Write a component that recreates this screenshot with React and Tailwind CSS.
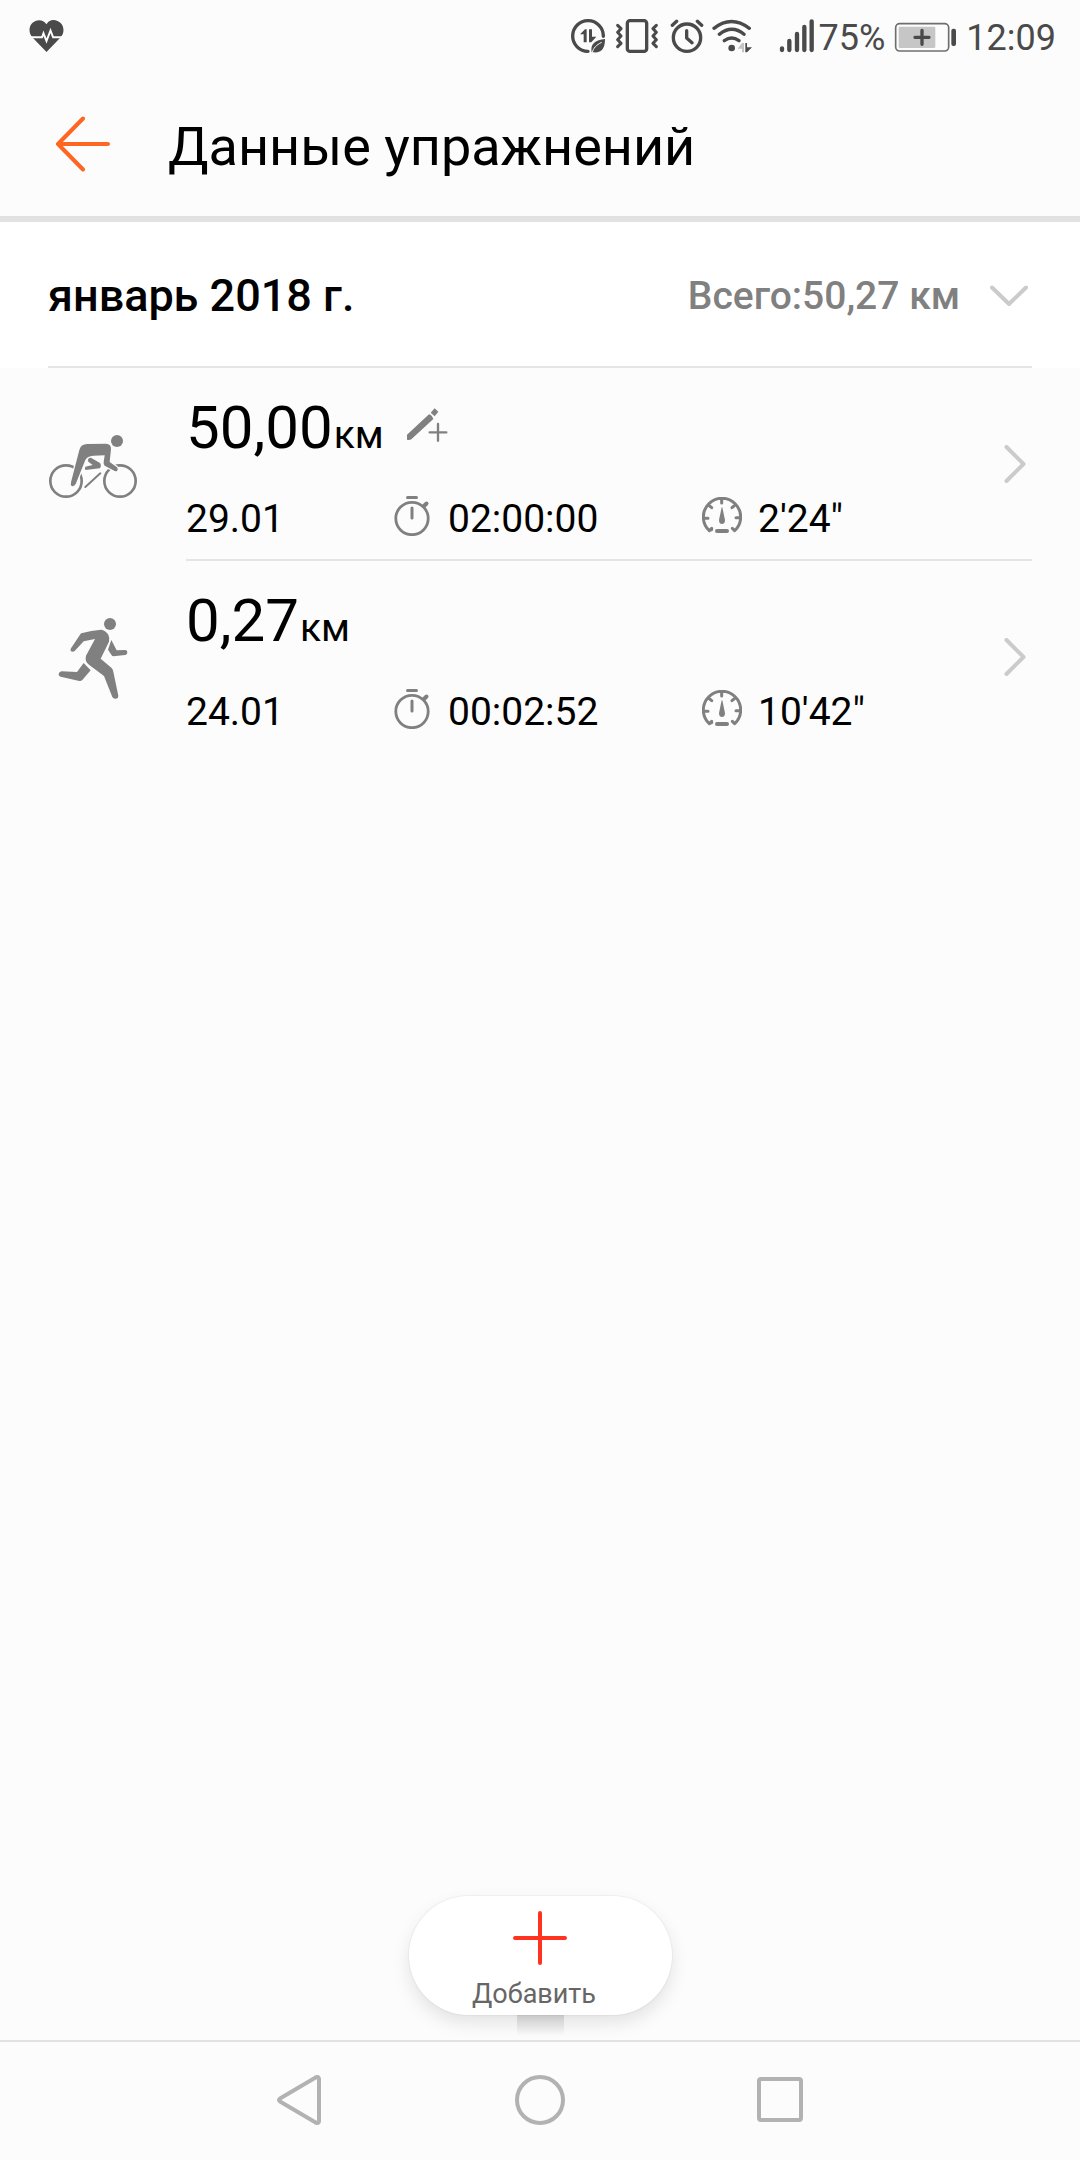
const workouts = [
  { id: 1, Icon: CyclistIcon, type: 'Велосипед', distance: '50,00', date: '29.01', time: '02:00:00', pace: '2\'24"', manual: true },
  { id: 2, Icon: RunnerIcon, type: 'Бег', distance: '0,27', date: '24.01', time: '00:02:52', pace: '10\'42"', manual: false }
]

export default function App() {
  return (
    <div className="min-h-screen flex flex-col bg-[#fcfcfc] text-black font-['Roboto','Noto_Sans',sans-serif]">
      <StatusBar />

      {/* Title bar */}
      <header className="h-[150px] flex items-center pl-12 border-b-6 border-[#e2e2e2]">
        <button type="button" aria-label="Назад" className="shrink-0 w-[72px]">
          <BackIcon />
        </button>
        <h1 className="pt-1.5 pl-12 text-[54px] leading-[72px]">Данные упражнений</h1>
      </header>

      <main className="flex-1 flex flex-col">
        {/* Month summary */}
        <section className="bg-white px-12">
          <button
            type="button"
            aria-expanded="true"
            className="w-full h-[146px] pt-[3px] flex items-center border-b-2 border-[#e5e5e5] text-left font-medium"
          >
            <span className="flex-1 text-[45px] leading-[60px]">январь 2018 г.</span>
            <span className="text-[39px] leading-[48px] text-[#808080]">Всего:50,27 км</span>
            <svg className="ml-[30px] mr-1 w-[38px] h-[22px]" viewBox="0 0 38 22" fill="none" stroke="#cbcbcb" strokeWidth="4" strokeLinecap="round" strokeLinejoin="round">
              <path d="M2 2.5 19 19 36 2.5" />
            </svg>
          </button>
        </section>

        <ul>
          {workouts.map(w => (
            <Workout key={w.id} {...w} />
          ))}
        </ul>

        {/* Add button */}
        <div className="mt-auto mb-[25px] flex justify-center">
          <div className="relative">
            <span className="absolute left-[108px] top-full w-[47px] h-5 bg-linear-to-b from-[#dcdcdc] to-[#fafafa]" />
            <button
              type="button"
              className="relative w-[263px] h-[119px] pt-[15px] flex flex-col items-center rounded-full bg-white shadow-[0_0_1px_1px_rgba(0,0,0,0.04),0_8px_18px_rgba(0,0,0,0.1)]"
            >
              <svg className="w-[54px] h-[54px]" viewBox="0 0 54 54" stroke="#ff3320" strokeWidth="4" strokeLinecap="round">
                <path d="M27 2v50M2 27h50" />
              </svg>
              <span className="mt-[13px] mr-3 text-[27px] leading-8 text-[#666]">Добавить</span>
            </button>
          </div>
        </div>
      </main>

      <NavBar />
    </div>
  )
}

function Workout({ Icon, type, distance, date, time, pace, manual }) {
  return (
    <li className="group">
      <a href="#" className="flex px-12">
        <span className="shrink-0 w-[138px] flex items-center pt-1">
          <Icon label={type} />
        </span>
        <span className="flex-1 flex items-center border-b-2 border-[#e5e5e5] group-last:border-transparent">
          <span className="flex-1 pt-5 pb-4">
            <span className="flex items-baseline h-20">
              <span className="text-[60px] leading-[80px]">{distance}</span>
              <span className="ml-px text-[39px] leading-[48px]">км</span>
              {manual && <ManualIcon />}
            </span>
            <span className="mt-[27px] -mr-7 grid grid-cols-[208fr_308fr_330fr] text-[39px] leading-[48px]">
              <span>{date}</span>
              <span className="flex items-start gap-[18px]">
                <StopwatchIcon />
                {time}
              </span>
              <span className="flex items-start gap-4">
                <GaugeIcon />
                {pace}
              </span>
            </span>
          </span>
          <svg className="mr-1.5 w-[22px] h-[38px]" viewBox="0 0 22 38" fill="none" stroke="#cbcbcb" strokeWidth="4" strokeLinecap="round" strokeLinejoin="round">
            <path d="M2.5 2 19.5 19 2.5 36" />
          </svg>
        </span>
      </a>
    </li>
  )
}

function StatusBar() {
  return (
    <div className="h-[72px] flex items-center pl-[29px] pr-6 text-[36px] leading-[48px] text-[#4a4a4a]">
      <svg className="w-[35px] h-8" viewBox="0 0 35 32">
        <path fill="#4a4a4a" d="M17.5 32 3.5 17.5C-1.5 12 0 3.5 6.5 1 10.5-.6 15 .6 17.5 4.2 20 0 24.5-.8 28.5 1 35 3.5 36.5 12 31.5 17.5Z" />
        <path fill="none" stroke="#fcfcfc" strokeWidth="2" d="M2 17.3h11l1.5-4L17.5 21l4-10.5 2.6 6.8H33" />
      </svg>

      <div className="ml-auto flex items-center">
        {/* Data saver */}
        <svg className="w-[34px] h-[34px]" viewBox="0 0 102 102">
          <path fill="none" stroke="#4a4a4a" strokeWidth="10" strokeLinecap="round" d="M51 97A46 46 0 1 1 97 52" />
          <path fill="#4a4a4a" d="M27 46 42 31h5v39h-9V46ZM54 31h9v22h13L61 70h-7Z" />
          <path fill="#4a4a4a" d="M62 100C58 78 68 64 102 60 102 88 92 103 66 100Z" />
          <path fill="none" stroke="#fcfcfc" strokeWidth="3" d="M64 101C66 88 76 78 92 70" />
        </svg>
        {/* Vibration */}
        <svg className="ml-[11px] w-[42px] h-[34px]" viewBox="0 0 126 102" fill="none" stroke="#4a4a4a" strokeWidth="10" strokeLinejoin="round" strokeLinecap="round">
          <rect x="34" y="5" width="58" height="92" rx="8" />
          <path strokeWidth="9" d="m5 19 10 10-10 11 10 11-10 11 10 11-10 10M121 19l-10 10 10 11-10 11 10 11-10 11 10 10" />
        </svg>
        {/* Alarm */}
        <svg className="ml-3 w-[34px] h-[34px]" viewBox="0 0 102 102" fill="none" stroke="#4a4a4a" strokeWidth="10" strokeLinecap="round" strokeLinejoin="round">
          <circle cx="51" cy="56" r="41" />
          <path d="M50 35v22l16 14M7 19 20 7M95 19 82 7" />
        </svg>
        {/* Wi-Fi */}
        <svg className="ml-2 w-[40px] h-[34px]" viewBox="0 0 120 102" fill="none" stroke="#4a4a4a" strokeWidth="10" strokeLinecap="round">
          <path d="M6 28Q58-13 112 28M22 46q38-30 74 0M37 65q22-16 44 0" />
          <circle cx="59" cy="87" r="10" fill="#4a4a4a" stroke="none" />
          <path fill="#c4c4c4" stroke="none" d="M77 89 90 72h6v28h-6V89Z" />
          <path fill="#4a4a4a" stroke="none" d="M100 72h5v13h15l-15 15h-5Z" />
        </svg>
        {/* Signal */}
        <svg className="ml-[27px] w-[36px] h-[34px]" viewBox="0 0 108 102" stroke="#4a4a4a" strokeWidth="13" strokeLinecap="round">
          <path d="M9 88v5M31 66v27M54 45v48M76 24v69M98 7v86" />
        </svg>
        <span className="ml-1 pt-1">75%</span>
        {/* Battery */}
        <svg className="ml-[9px] mt-0.5 w-[63px] h-[30px]" viewBox="0 0 189 90">
          <rect x="5" y="5" width="159" height="82" rx="12" fill="none" stroke="#6e6e6e" strokeWidth="5" />
          <rect x="14" y="14" width="110" height="64" rx="4" fill="#c6c6c6" />
          <path d="M84 25v42M63 46h42" stroke="#4a4a4a" strokeWidth="10" strokeLinecap="round" />
          <rect x="172" y="20" width="14" height="52" rx="6" fill="#4a4a4a" />
        </svg>
        <span className="ml-[9px] pt-1">12:09</span>
      </div>
    </div>
  )
}

function NavBar() {
  return (
    <nav className="h-[120px] pb-0.5 flex justify-center border-t-2 border-[#e2e2e2]">
      <button type="button" aria-label="Назад" className="w-[240px] flex items-center justify-center">
        <svg className="w-[52px] h-[52px]" viewBox="0 0 52 52" fill="none" stroke="#b2b2b2" strokeWidth="4" strokeLinejoin="round">
          <path d="M6 24.5 42.5 3Q45 2.5 45 5v42q0 2.5-2.5 2L6 27.5Q4 26 6 24.5Z" />
        </svg>
      </button>
      <button type="button" aria-label="Главный экран" className="w-[240px] flex items-center justify-center">
        <svg className="w-[52px] h-[52px]" viewBox="0 0 52 52" fill="none" stroke="#b2b2b2" strokeWidth="4">
          <circle cx="26" cy="26" r="23" />
        </svg>
      </button>
      <button type="button" aria-label="Недавние" className="w-[240px] flex items-center justify-center">
        <svg className="w-[52px] h-[52px]" viewBox="0 0 52 52" fill="none" stroke="#b2b2b2" strokeWidth="4">
          <rect x="5" y="5" width="42" height="41" rx="2" />
        </svg>
      </button>
    </nav>
  )
}

function BackIcon() {
  return (
    <svg className="ml-[7px] w-14 h-14" viewBox="0 0 56 56" fill="none" stroke="#ff6622" strokeWidth="4" strokeLinecap="round" strokeLinejoin="round">
      <path d="M28 2.5 3 28l25 25.5M3 28h50" />
    </svg>
  )
}

function CyclistIcon({ label }) {
  return (
    <svg role="img" aria-label={label} className="w-[90px] h-[65px]" viewBox="54 192 270 195" fill="none" stroke="#808080" strokeLinecap="round" strokeLinejoin="round">
      <circle cx="108" cy="333" r="47" strokeWidth="8" />
      <circle cx="270" cy="333" r="47" strokeWidth="8" />
      {/* light outline keeps the wheels clear of the leg and the arm */}
      <path fill="#808080" stroke="#fcfcfc" strokeWidth="8" paintOrder="stroke" d="M148 240Q152 222 172 222L228 221Q244 222 243 238L239 276 260 291Q266 298 261 303 256 305 250 301L224 287Q220 283 221 276L224 256 190 257Q172 258 166 270L137 342Q133 350 125 348 121 346 123 337Z" />
      <path fill="#808080" stroke="none" d="M174 269q2-7 10-5l26 15q6 10-1 16l-42 5q-4-3-1-10l22-5-12-9q-4-4-2-7Z" />
      <path strokeWidth="6" d="m166 351 45-41" />
      <circle cx="261" cy="213" r="18" fill="#808080" stroke="none" />
    </svg>
  )
}

function RunnerIcon({ label }) {
  return (
    <svg role="img" aria-label={label} className="w-[90px] h-[83px]" viewBox="54 141 270 249" fill="#808080">
      <circle cx="240" cy="159" r="18" />
      <path d="M154 187Q184 178 213 176 226 177 235 191 240 202 237 212L212 263 244 290Q249 295 250 302L265 374Q265 383 257 383 250 384 247 378L222 315 177 281Q163 270 168 254L195 204 161 211 134 240Q128 245 122 240 121 236 123 232L150 191Q152 188 154 187Z" />
      <path d="m244 207 16 31 27-1q6 2 5 8-1 5-6 7l-36 4q-3 0-5-3l-11-17Z" />
      <path d="m161 276 21 22-25 29q-4 4-9 3l-56-13q-7-2-6-9 2-6 9-7l46 2Z" />
    </svg>
  )
}

function ManualIcon() {
  return (
    <svg className="self-start ml-[22px] mt-5 w-[42px] h-[35px]" viewBox="1126 115 126 105" fill="#808080" stroke="#808080">
      <path stroke="none" d="m1129 195 66-61q9 2 13 14l-66 61q-6 3-13 1ZM1200 129l12-13 11 10-11 14Z" />
      <path fill="none" strokeWidth="7" strokeLinecap="round" d="M1222 163v50M1197 188h50" />
    </svg>
  )
}

function StopwatchIcon() {
  return (
    <svg className="shrink-0 mt-px w-9 h-10" viewBox="0 0 36 40" fill="none" stroke="#808080" strokeWidth="2.8" strokeLinecap="round">
      <circle cx="18" cy="22.5" r="16.2" />
      <path strokeWidth="3" d="M13.5 1.6h9M18 12v10" />
      <path strokeWidth="4" d="m30 10 2.5-2.5" />
    </svg>
  )
}

function GaugeIcon() {
  return (
    <svg className="shrink-0 mt-0.5 w-10 h-10" viewBox="0 0 120 120" fill="none" stroke="#808080" strokeWidth="9" strokeLinecap="round" strokeLinejoin="round">
      <path d="M29 98 22 101A56 56 0 1 1 98 101L91 94M22 101 29 94M59 6v12M23 27l6 5M96 27l-6 5M6 64h12M114 62h-12" />
      <path strokeWidth="12" d="M45 102h30" />
      <path fill="#808080" stroke="none" d="M59 31h2l8 38q0 12-9 12t-9-12Z" />
    </svg>
  )
}
